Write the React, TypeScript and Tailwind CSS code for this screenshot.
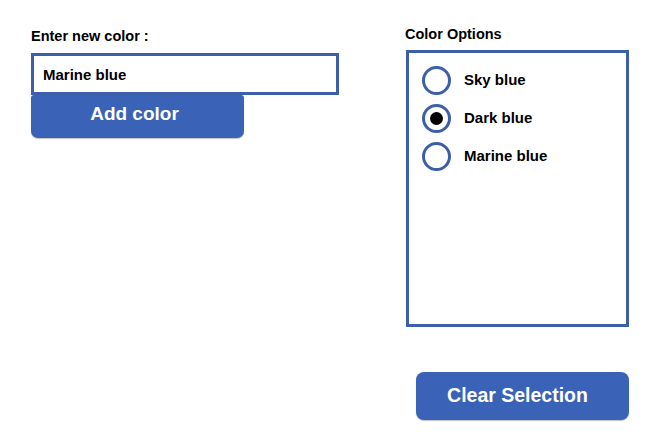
import { useState } from 'react';

const options = ['Sky blue', 'Dark blue', 'Marine blue'];

export default function App() {
  const [value, setValue] = useState('Marine blue');
  const [selected, setSelected] = useState('Dark blue');

  return (
    <div className="w-[659px] h-[435px] bg-white flex font-['Liberation_Sans',Arial,sans-serif] text-black">
      {/* LEFT: new color form */}
      <div className="ml-[31px] mt-[28px] w-[308px] flex flex-col">
        <label className="text-[14.5px] font-bold leading-[17px]">Enter new color :</label>
        <input
          value={value}
          onChange={(e) => setValue(e.target.value)}
          className="mt-[8px] h-[42px] w-full border-[3px] border-[#3d5ea8] px-[9px] text-[15px] font-bold outline-none"
        />
        <button className="w-[213px] h-[43px] rounded-t-[3px] rounded-b-[7px] bg-[#3a62b6] text-white text-[19px] font-bold leading-none pb-[6px] pr-[6px] shadow-[0_1px_1px_rgba(0,0,0,0.25)]">
          Add color
        </button>
      </div>

      {/* RIGHT: options */}
      <div className="ml-[66px] mt-[26px] w-[224px] flex flex-col">
        <div className="text-[14.5px] font-bold leading-[17px]">Color Options</div>
        <div className="mt-[7px] ml-[1px] w-[223px] h-[277px] border-[3px] border-[#3d5ea8] pt-[13px] pl-[13px] flex flex-col gap-[9px]">
          {options.map((opt) => (
            <label key={opt} className="flex items-center gap-[13px] cursor-pointer" onClick={() => setSelected(opt)}>
              <span className="w-[29px] h-[29px] rounded-full border-[3px] border-[#3d5ea8] flex items-center justify-center">
                {selected === opt && <span className="w-[13px] h-[13px] rounded-full bg-black" />}
              </span>
              <span className="text-[15px] font-bold">{opt}</span>
            </label>
          ))}
        </div>
        <button
          onClick={() => setSelected('')}
          className="mt-[45px] ml-[11px] w-[213px] h-[48px] rounded-[8px] bg-[#3a62b6] text-white text-[19.5px] font-bold pr-[10px] shadow-[0_1px_1px_rgba(0,0,0,0.25)]"
        >
          Clear Selection
        </button>
      </div>
    </div>
  );
}
